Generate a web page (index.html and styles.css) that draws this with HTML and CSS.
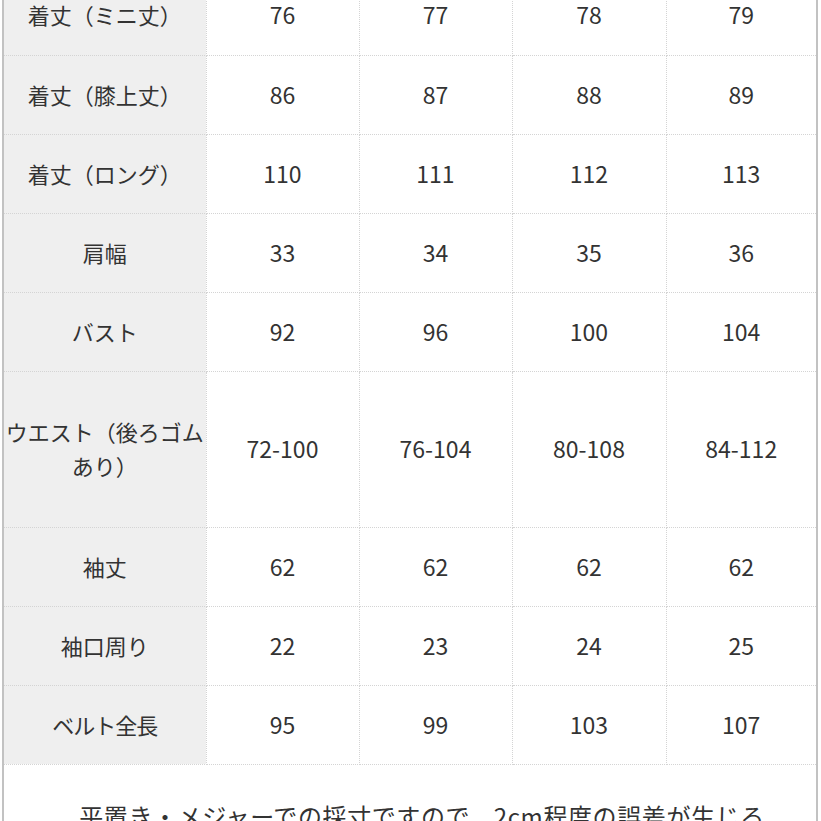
FILE: index.html
```html
<!DOCTYPE html>
<html lang="ja">
<head>
<meta charset="utf-8">
<link rel="stylesheet" href="styles.css">
</head>
<body>
<div class="frame">
  <table class="size">
    <colgroup>
      <col class="c1"><col class="c2"><col class="c3"><col class="c4"><col class="c5">
    </colgroup>
    <tr><th>着丈（ミニ丈）</th><td>76</td><td>77</td><td>78</td><td>79</td></tr>
    <tr><th>着丈（膝上丈）</th><td>86</td><td>87</td><td>88</td><td>89</td></tr>
    <tr><th>着丈（ロング）</th><td>110</td><td>111</td><td>112</td><td>113</td></tr>
    <tr><th>肩幅</th><td>33</td><td>34</td><td>35</td><td>36</td></tr>
    <tr><th>バスト</th><td>92</td><td>96</td><td>100</td><td>104</td></tr>
    <tr class="tall"><th>ウエスト（後ろゴムあり）</th><td>72-100</td><td>76-104</td><td>80-108</td><td>84-112</td></tr>
    <tr><th>袖丈</th><td>62</td><td>62</td><td>62</td><td>62</td></tr>
    <tr><th>袖口周り</th><td>22</td><td>23</td><td>24</td><td>25</td></tr>
    <tr><th class="narrow">ベルト全長</th><td>95</td><td>99</td><td>103</td><td>107</td></tr>
  </table>
  <p class="note">平置き・メジャーでの採寸ですので、2cm程度の誤差が生じる場合がございます。</p>
</div>
</body>
</html>
```

FILE: styles.css
```css
html, body {
  margin: 0;
  padding: 0;
  background: #ffffff;
  overflow: hidden;
}
body {
  font-family: "Noto Sans CJK JP", "Noto Sans", sans-serif;
  color: #333333;
}
.frame {
  margin-left: 2px;
  margin-top: -24px;
  width: 812px;
  border-left: 2px solid #c2c2c2;
  border-right: 2px solid #c2c2c2;
  background: #ffffff;
}
.size {
  width: 812px;
  border-collapse: collapse;
  table-layout: fixed;
}
.c1 { width: 202px; }
.c2 { width: 153px; }
.c3 { width: 153px; }
.c4 { width: 154px; }
.c5 { width: 150px; }
.size tr {
  height: 79px;
}
.size tr.tall {
  height: 156px;
}
.size th,
.size td {
  border: 1px dotted #d4d4d4;
  padding: 0 0 2px;
  text-align: center;
  vertical-align: middle;
  font-size: 22px;
  font-weight: 400;
  line-height: 34px;
  color: #333333;
}
.size td {
  font-size: 23px;
}
.size th {
  background: #efefef;
}
.size th.narrow {
  letter-spacing: -1px;
}
.size tr:first-child th,
.size tr:first-child td {
  border-top: none;
}
.size tr th:first-child {
  border-left: none;
}
.size tr td:last-child {
  border-right: none;
}
.note {
  margin: 0;
  padding: 32px 40px 0 64px;
  text-align: center;
  font-size: 24px;
  letter-spacing: 0.6px;
  line-height: 38px;
  color: #333333;
}
```
